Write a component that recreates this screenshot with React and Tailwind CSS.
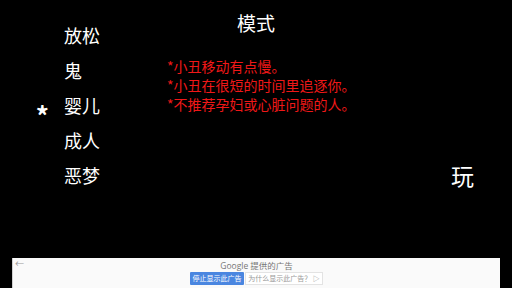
import React from 'react';

const modes = ['放松', '鬼', '婴儿', '成人', '恶梦'];
const notes = ['*小丑移动有点慢。', '*小丑在很短的时间里追逐你。', '*不推荐孕妇或心脏问题的人。'];

export default function App() {
  const selected = 2;
  const cjk = { fontFamily: '"Noto Sans CJK SC", "Noto Sans", sans-serif' };

  return (
    <div className="w-[512px] h-[288px] bg-black flex flex-col overflow-hidden" style={cjk}>
      {/* Game area */}
      <div className="h-[258px] flex">
        {/* Mode list */}
        <div className="w-[150px] pt-[17px] flex flex-col">
          {modes.map((m, i) => (
            <div key={m} className="h-[35.2px] flex items-center">
              <div className="w-[64px] flex justify-end pr-[15px] text-white text-[26px] font-bold leading-none pt-[20px]">
                {i === selected ? '*' : ''}
              </div>
              <div className="text-white text-[18px] leading-none">{m}</div>
            </div>
          ))}
        </div>

        {/* Title and notes */}
        <div className="w-[212px] flex flex-col">
          <div className="pt-[12px] h-[40px] text-center text-white text-[19px] leading-[22px]">模式</div>
          <div className="pl-[17px] pt-[17px] flex flex-col">
            {notes.map((n) => (
              <div key={n} className="text-[#f01818] text-[14px] leading-[19px] whitespace-nowrap">{n}</div>
            ))}
          </div>
        </div>

        {/* Play */}
        <div className="flex-1 flex justify-end items-start pr-[38px] pt-[161px]">
          <span className="text-white text-[23px] leading-[28px]">玩</span>
        </div>
      </div>

      {/* Ad banner */}
      <div className="mx-[12px] h-[30px] bg-[#fafafa] border-l border-[#d0d0d0] flex flex-col items-center relative">
        <span className="absolute left-[2px] top-[1px] text-[#999] text-[9px] leading-none">←</span>
        <div className="pt-[2px] h-[13px] text-[#777] text-[8.5px] leading-[11px]">
          <span style={{ fontFamily: '"Open Sans", "Noto Sans", sans-serif' }}>Google</span> 提供的广告
        </div>
        <div className="flex pt-[1px]">
          <div className="w-[54px] h-[13px] bg-[#4a86e0] rounded-[1px] text-white text-[7px] leading-[13px] text-center">停止显示此广告</div>
          <div className="w-[78px] h-[13px] ml-[1px] bg-white border border-[#e3e3e3] text-[#999] text-[7px] leading-[11px] text-center">为什么显示此广告？ ▷</div>
        </div>
      </div>
    </div>
  );
}
